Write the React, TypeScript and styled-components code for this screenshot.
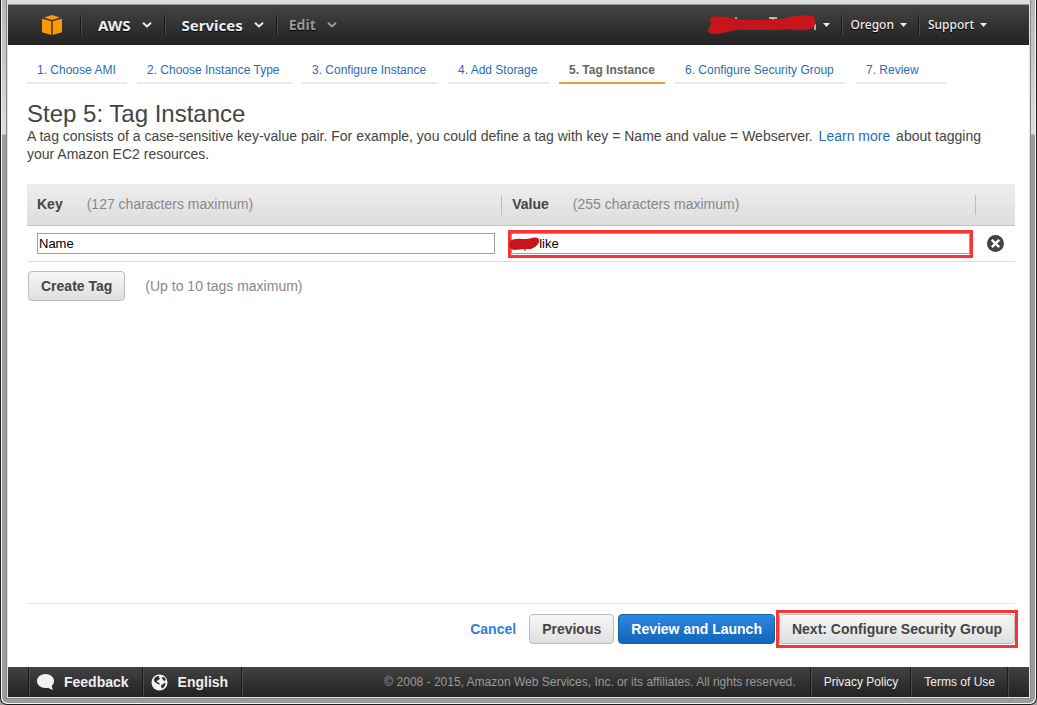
import React from "react";
import styled, { createGlobalStyle, css } from "styled-components";

const Global = createGlobalStyle`
  * { box-sizing: border-box; }
  html, body, #root { height: 100%; }
  body { margin: 0; font-family: "Liberation Sans", Arial, sans-serif; font-size: 14px; line-height: 18px; color: #444; background: #a0a0a0; }
  button, input { font: inherit; margin: 0; }
  a { text-decoration: none; }
`;

const Frame = styled.div`
  min-height: 100%;
  display: flex;
  padding: 0 1px 1px;
  border: solid #1c1c1c;
  border-width: 0 1px 1px;
  border-radius: 0 0 7px 7px;
  background: #f4f4f4;
`;

const Chrome = styled.div`
  flex: 1;
  min-width: 0;
  display: flex;
  padding: 0 5px 5px;
  border-radius: 0 0 6px 6px;
  background: linear-gradient(#b8b6b6 0, #dedede 134px, #9c9c9c 135px);
`;

const Page = styled.div`
  flex: 1;
  min-width: 0;
  display: flex;
  flex-direction: column;
  border: 1px solid #e4e4e4;
  border-top: 4px solid #dedede;
  background: #fff;
  box-shadow: 0 0 0 1px #858585;
`;

const NavBar = styled.header`
  height: 41px;
  display: flex;
  align-items: center;
  padding-right: 31px;
  border-top: 1px solid #999;
  background: linear-gradient(#444, #222);
`;

const LogoLink = styled.a`
  display: flex;
  padding: 0 18px 0 34px;
`;

const Spacer = styled.div`
  flex: 1;
`;

const NavButton = styled.button<{ $small?: boolean; $dim?: boolean }>`
  height: 20px;
  display: flex;
  align-items: center;
  gap: 11px;
  padding: 0 12px 0 16px;
  border: 0;
  background: none;
  color: #eee;
  font: 700 15px/20px "Noto Sans", sans-serif;
  text-shadow: 0 1px 1px #000;
  ${(p) => p.$small && css`
    gap: 6px;
    padding: 0 11px 0 8px;
    font-size: 12px;
    font-weight: 500;
    line-height: 22px;
  `}
  ${(p) => p.$dim && css`
    padding-left: 11px;
    font-size: 14px;
    line-height: 22px;
    color: #999;
  `}
`;

const Divider = styled.div<{ $tall?: boolean }>`
  width: 2px;
  height: ${(p) => (p.$tall ? 30 : 20)}px;
  border-left: 1px solid #1a1a1a;
  border-right: 1px solid #4a4a4a;
`;

const Content = styled.main`
  flex: 1;
  display: flex;
  flex-direction: column;
  padding: 16px 14px 19px 19px;
`;

const Steps = styled.nav`
  display: grid;
  grid-template-columns: 100px 155px 136px 101px 106px 171px 90px;
  gap: 10px;
`;

const Step = styled.a<{ $active?: boolean }>`
  padding: 0 0 3px 10px;
  border-bottom: 2px solid #eaeaea;
  font-size: 12px;
  color: #2a6db5;
  white-space: nowrap;
  ${(p) => p.$active && css`
    color: #666;
    font-weight: 700;
    border-color: #f79b2e;
  `}
`;

const Title = styled.h1`
  margin: 17px 0 0;
  font-size: 24px;
  font-weight: 400;
  line-height: 26px;
`;

const Intro = styled.p`
  margin: 0 0 21px;
  padding-right: 10px;
`;

const TextLink = styled.a`
  margin: 0 2px;
  color: #1f6cb5;
`;

const TagTable = styled.table`
  width: 100%;
  table-layout: fixed;
  border-spacing: 0;
`;

const HeadCell = styled.th<{ $width: string }>`
  width: ${(p) => p.$width};
  height: 42px;
  padding: 0;
  text-align: left;
  border-bottom: 1px solid #c4c4c4;
  background: linear-gradient(#eee, #ddd);
`;

const HeadLabel = styled.div<{ $line?: boolean }>`
  min-height: 20px;
  display: flex;
  gap: 24px;
  padding-left: 10px;
  border-left: ${(p) => (p.$line ? "1px solid #bbb" : "0")};
`;

const Hint = styled.span`
  font-weight: 400;
  color: #888;
`;

const Cell = styled.td`
  height: 36px;
  padding: 0 6px 0 10px;
  border-bottom: 1px solid #ddd;
  &:nth-child(2) { padding: 0 2px 0 7px; }
  &:nth-child(3) { padding: 0 0 0 12px; }
`;

const Field = styled.input<{ $indent?: boolean }>`
  display: block;
  width: 100%;
  height: 21px;
  padding: 0 1px 0 ${(p) => (p.$indent ? 27 : 1)}px;
  border: 1px solid #a0a0a0;
  border-radius: 0;
  background: #fff;
  font-size: 13px;
  color: #000;
`;

const Highlight = styled.div`
  position: relative;
  padding-bottom: 1px;
  border: 3px solid #fb3535;
`;

const FieldMark = styled.svg`
  position: absolute;
  left: -2px;
  top: 4px;
`;

const IconButton = styled.button`
  display: flex;
  padding: 0;
  border: 0;
  background: none;
`;

const Actions = styled.div`
  display: flex;
  align-items: center;
  gap: 20px;
  padding: 9px 1px;
`;

const Button = styled.button<{ $kind?: "primary" | "link" }>`
  height: 30px;
  padding: 0 12px;
  border: 1px solid #bbb;
  border-radius: 4px;
  background: linear-gradient(#f7f7f7, #dfdfdf);
  color: #444;
  font-weight: 700;
  white-space: nowrap;
  ${(p) => p.$kind === "primary" && css`
    border-color: #1b5ea8;
    background: linear-gradient(#2e86de, #1166bb);
    color: #fff;
  `}
  ${(p) => p.$kind === "link" && css`
    padding: 0 8px;
    border-color: transparent;
    background: none;
    color: #2f80d8;
  `}
`;

const Wizard = styled.div`
  display: flex;
  align-items: center;
  justify-content: flex-end;
  gap: 4px;
  margin-top: auto;
  padding-top: 6px;
  border-top: 1px solid #e8e8e8;
`;

const ButtonFrame = styled.div`
  display: flex;
  margin: 0 -3px;
  padding: 1px 0;
  border: 3px solid #fb3535;
`;

const Footer = styled.footer`
  height: 30px;
  display: flex;
  align-items: center;
  padding: 0 20px;
  background: linear-gradient(#424242, #222);
`;

const FootButton = styled.button`
  display: flex;
  align-items: center;
  gap: 10px;
  padding: 0 13px 0 7px;
  border: 0;
  background: none;
  color: #eee;
  font-weight: 700;
`;

const FootLink = styled.a`
  padding: 0 12px;
  font-size: 12px;
  color: #eee;
  white-space: nowrap;
`;

const Copyright = styled.small`
  flex: 1;
  padding-right: 14px;
  font-size: 12px;
  color: #999;
  text-align: right;
  white-space: nowrap;
`;

const Chevron = () => (
  <svg width="10" height="6" viewBox="0 0 10 6"><path d="M1 .8l4 3.600L9 .8" fill="none" stroke="currentColor" strokeWidth="2" /></svg>
);

const Caret = () => (
  <svg width="7" height="4" viewBox="0 0 7 4"><path d="M0 0h7L3.500 4z" fill="currentColor" /></svg>
);

const Cube = () => (
  <svg width="20" height="20" viewBox="0 0 20 20" fill="#f90">
    <path d="M2 2.600L10 0l8 2.600L10 5z" />
    <path d="M0 3.800l9.300 2.400V20L0 17.200zM20 3.800l-9.300 2.400V20l9.300-2.800z" />
  </svg>
);

const Bubble = () => (
  <svg width="17" height="16" viewBox="0 0 17 16" fill="#f2f2f2">
    <path d="M8.500 0C13.200 0 17 3 17 6.900c0 2-.9 3.700-2.300 5 .1 1.400.6 2.600 1.500 3.600-2 0-3.800-.8-5-1.800-.9.2-1.800.2-2.700.2C3.800 13.900 0 10.800 0 6.900 0 3 3.800 0 8.500 0z" />
  </svg>
);

const Globe = () => (
  <svg width="17" height="17" viewBox="0 0 17 17">
    <circle cx="8.500" cy="8.500" r="8" fill="#f2f2f2" />
    <path d="M4 3.500l2.500-1.500 2 .5-.6 1.500 1.300.6-1.700 1.500-1.300.4-.4 1.300 1.600.7 1.400 1-.4 1.200L6 9.500 3.800 8 2.800 6zM11 3l2.200.2 1.600 2.300-.8 1.500-1.500-.5-1.200-1.500zM10 11l2.500-1 .8-1.500 1.200 1-.8 2.500-2.200 2.500-1.200-1z" fill="#303030" />
  </svg>
);

const Remove = () => (
  <svg width="17" height="17" viewBox="0 0 17 17">
    <circle cx="8.500" cy="8.500" r="8.500" fill="#444" />
    <path d="M4.800 4.800l7.400 7.400M12.200 4.800l-7.400 7.400" stroke="#fff" strokeWidth="2.400" />
  </svg>
);

const steps = [
  "1. Choose AMI",
  "2. Choose Instance Type",
  "3. Configure Instance",
  "4. Add Storage",
  "5. Tag Instance",
  "6. Configure Security Group",
  "7. Review",
];

export default function App() {
  return (
    <Frame>
      <Global />
      <Chrome>
        <Page>
          <NavBar>
            <LogoLink href="#" aria-label="Home"><Cube /></LogoLink>
            <Divider />
            <NavButton>AWS <Chevron /></NavButton>
            <Divider />
            <NavButton>Services <Chevron /></NavButton>
            <Divider />
            <NavButton $dim>Edit <Chevron /></NavButton>
            <Spacer />
            <NavButton $small aria-label="Account">
              <svg width="109" height="22" viewBox="0 0 109 22">
                <path d="M28 3v4M61 4h8M65 4v4M107 10v6" stroke="#ddd" strokeWidth="1.500" />
                <path d="M2 7Q1 2 8 2.500C18 2 22 4 32 5.200C48 6.500 68 6 78 4C88 1 98 .5 105 2Q110 7 106 13C100 18 88 15.500 76 15.500C62 16 44 16.500 30 15.500C22 17 12 21 2 19.500Q-2 16 2 12Q4 10 2 7z" fill="#c8151b" />
              </svg>
              <Caret />
            </NavButton>
            <Divider />
            <NavButton $small>Oregon <Caret /></NavButton>
            <Divider />
            <NavButton $small>Support <Caret /></NavButton>
          </NavBar>
          <Content>
            <Steps>
              {steps.map((s, i) => <Step key={s} href="#" $active={i === 4}>{s}</Step>)}
            </Steps>
            <Title>Step 5: Tag Instance</Title>
            <Intro>
              A tag consists of a case-sensitive key-value pair. For example, you could define a tag with key = Name and value = Webserver. <TextLink href="#">Learn more</TextLink> about tagging your Amazon EC2 resources.
            </Intro>
            <TagTable>
              <thead>
                <tr>
                  <HeadCell $width="48%"><HeadLabel>Key<Hint>(127 characters maximum)</Hint></HeadLabel></HeadCell>
                  <HeadCell $width="48%"><HeadLabel $line>Value<Hint>(255 characters maximum)</Hint></HeadLabel></HeadCell>
                  <HeadCell $width="4%"><HeadLabel $line /></HeadCell>
                </tr>
              </thead>
              <tbody>
                <tr>
                  <Cell><Field aria-label="Key" defaultValue="Name" /></Cell>
                  <Cell>
                    <Highlight>
                      <Field $indent aria-label="Value" defaultValue="like" />
                      <FieldMark width="32" height="14" viewBox="0 0 32 14">
                        <path d="M16 9v5" stroke="#223" strokeWidth="1" />
                        <path d="M1 4Q5 1 14 2Q20 2 25 .5Q31 0 30 5Q28 10 22 12Q12 12 5 13Q-2 11 1 4z" fill="#c8151b" />
                      </FieldMark>
                    </Highlight>
                  </Cell>
                  <Cell><IconButton aria-label="Remove tag"><Remove /></IconButton></Cell>
                </tr>
              </tbody>
            </TagTable>
            <Actions><Button>Create Tag</Button><Hint>(Up to 10 tags maximum)</Hint></Actions>
            <Wizard>
              <Button $kind="link">Cancel</Button>
              <Button>Previous</Button>
              <Button $kind="primary">Review and Launch</Button>
              <ButtonFrame><Button>Next: Configure Security Group</Button></ButtonFrame>
            </Wizard>
          </Content>
          <Footer>
            <Divider $tall />
            <FootButton><Bubble />Feedback</FootButton>
            <Divider $tall />
            <FootButton><Globe />English</FootButton>
            <Divider $tall />
            <Copyright>© 2008 - 2015, Amazon Web Services, Inc. or its affiliates. All rights reserved.</Copyright>
            <Divider $tall />
            <FootLink href="#">Privacy Policy</FootLink>
            <Divider $tall />
            <FootLink href="#">Terms of Use</FootLink>
            <Divider $tall />
          </Footer>
        </Page>
      </Chrome>
    </Frame>
  );
}
